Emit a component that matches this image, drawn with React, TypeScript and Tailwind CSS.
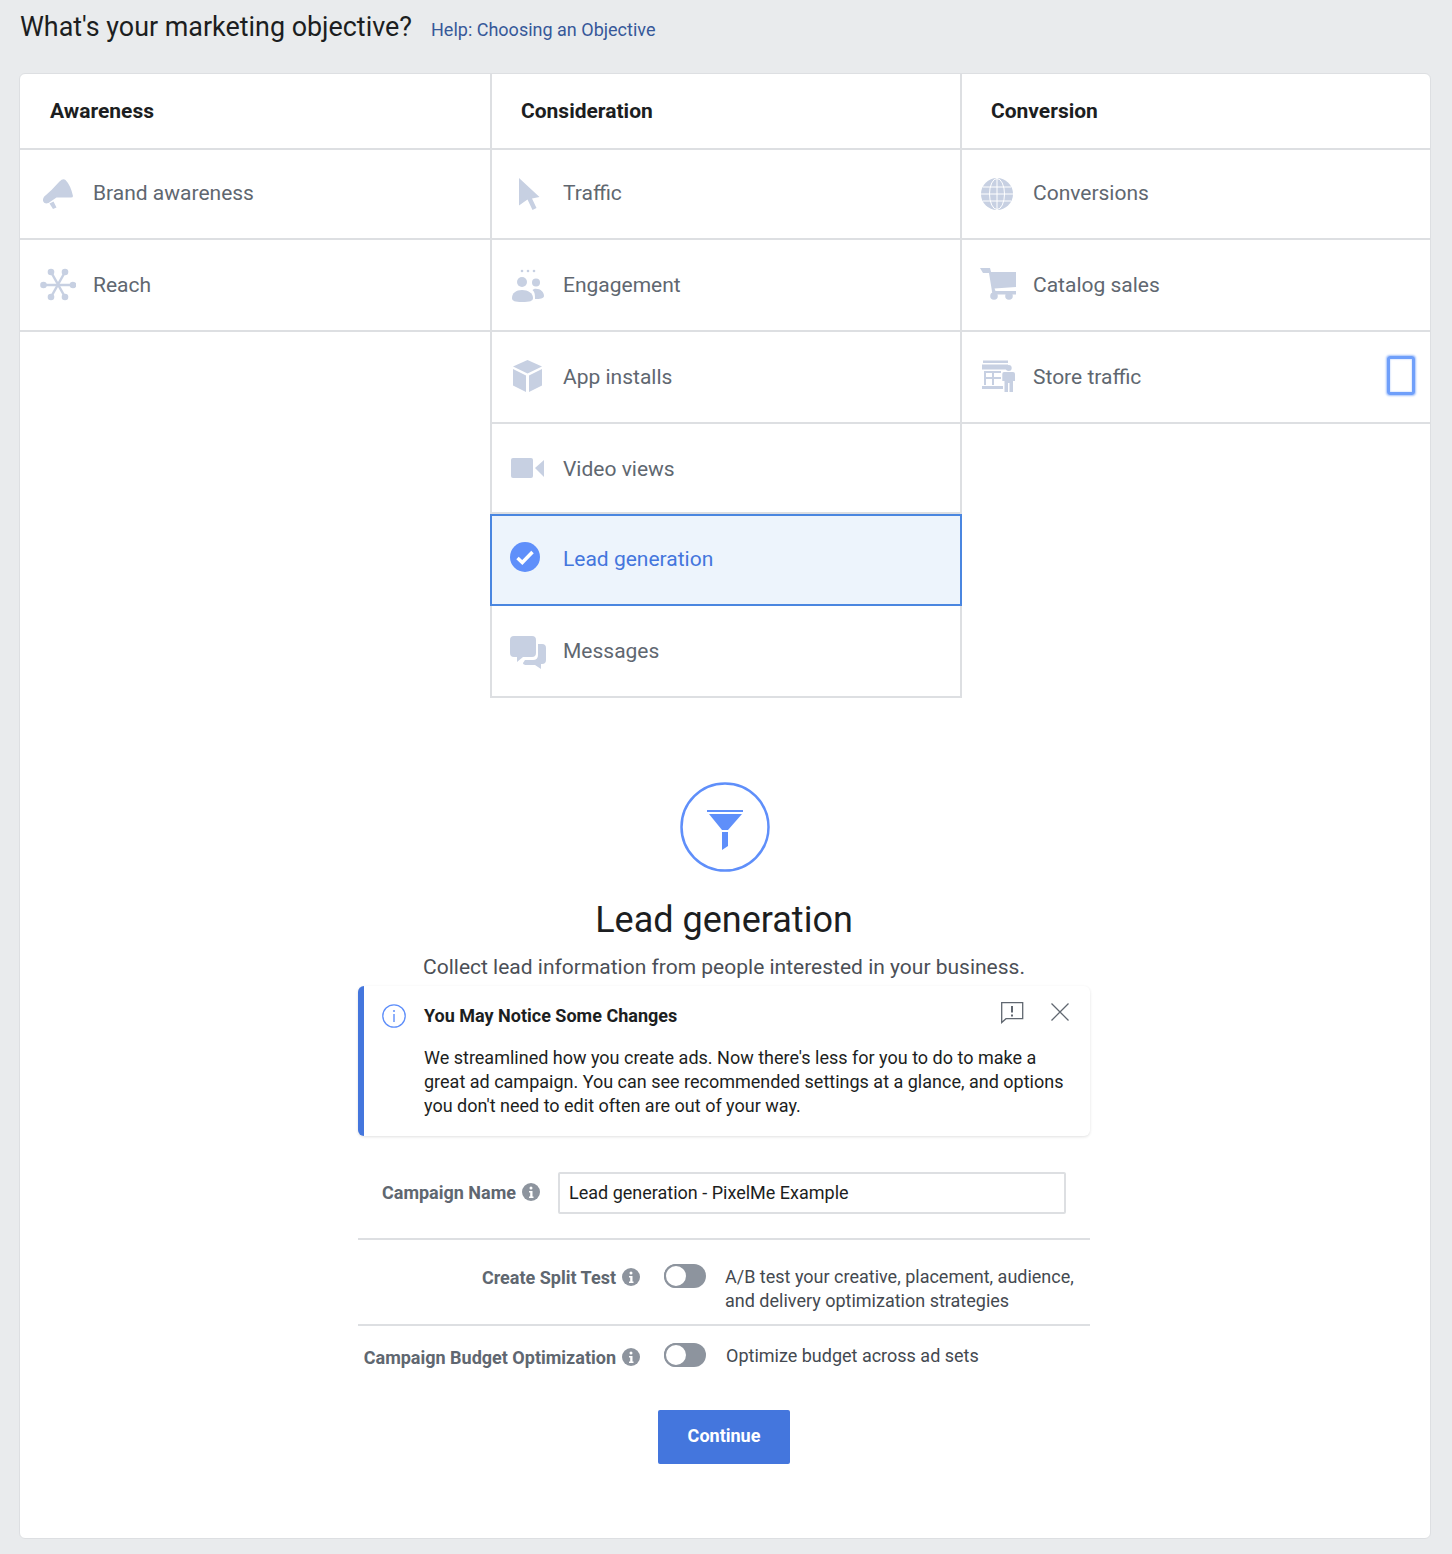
import React from 'react';

const ICON = '#c7d0e2';

const Megaphone = () => (
  <svg width="36" height="36" viewBox="0 0 36 36" fill={ICON}>
    <path d="M19.500 5.500 Q23 1.800 25.500 4 Q30.500 9 33 20 Q33 21.500 31 21.500 L16.500 21.500 L8.500 27 Q4 28.500 3 25 Q2.500 21.500 6 19 L11.500 14 Z" />
    <path d="M9.500 27.500 L13.500 25.500 L16.500 31.500 L13 33 Z" />
  </svg>
);

const Reach = () => (
  <svg width="36" height="36" viewBox="0 0 36 36" fill={ICON} stroke={ICON}>
    <g strokeWidth="2.500">
      <line x1="2" y1="18" x2="34" y2="18" />
      <line x1="11" y1="5" x2="25" y2="30" />
      <line x1="25" y1="5" x2="11" y2="30" />
    </g>
    <g stroke="none">
      <circle cx="3.500" cy="18" r="3.300" />
      <circle cx="33" cy="18" r="3.300" />
      <circle cx="11" cy="5" r="3.300" />
      <circle cx="25" cy="5" r="3.300" />
      <circle cx="11" cy="30" r="3.300" />
      <circle cx="25" cy="30" r="3.300" />
    </g>
  </svg>
);

const Cursor = () => (
  <svg width="36" height="36" viewBox="0 0 36 36" fill={ICON}>
    <polygon points="9,2 29.500,21 22,22.500 26.500,32 22.500,34 17.500,23.500 9,29.500" />
  </svg>
);

const People = () => (
  <svg width="36" height="36" viewBox="0 0 36 36" fill={ICON}>
    <circle cx="12" cy="4" r="1.300" />
    <circle cx="18" cy="4" r="1.300" />
    <circle cx="24" cy="4" r="1.300" />
    <circle cx="12" cy="15" r="5" />
    <circle cx="26" cy="15.500" r="4" />
    <path d="M2 31 C2 26 6 23 12 23 C18 23 23 26 23 31 C23 34 20 35 12 35 C5 35 2 34 2 31 Z" />
    <path d="M24 22 C30 21 34 25 34 29 C34 31.500 30 32 25 32 C25 28 25 25 22.500 23 Z" />
  </svg>
);

const Cube = () => (
  <svg width="36" height="36" viewBox="0 0 36 36" fill={ICON}>
    <polygon points="17.500,1 32,7.500 17.500,14.500 3,7.500" />
    <polygon points="3,10 16,16.500 16,33 3,26.500" />
    <polygon points="32,10 19,16.500 19,33 32,26.500" />
  </svg>
);

const Video = () => (
  <svg width="36" height="36" viewBox="0 0 36 36" fill={ICON}>
    <rect x="1" y="8" width="22" height="20" rx="2" />
    <polygon points="25,18 34,10 34,27" />
  </svg>
);

const CheckCircle = () => (
  <svg width="36" height="36" viewBox="0 0 36 36">
    <circle cx="15" cy="15" r="15" fill="#5f8ffa" />
    <path d="M7.500 16 L12.300 20.500 L22.500 10" fill="none" stroke="#fff" strokeWidth="3.500" />
  </svg>
);

const Bubbles = () => (
  <svg width="36" height="36" viewBox="0 0 36 36" fill={ICON}>
    <path d="M4 3 H22 Q26 3 26 7 V20 Q26 24 22 24 H13 L7 29 V24 H4 Q0 24 0 20 V7 Q0 3 4 3 Z" />
    <path d="M28 11 H32 Q36 11 36 15 V27 Q36 31 32 31 H31 V36 L25 32 H17 Q13 32 13 30 L15 27 H23 Q28 27 28 22 Z" />
  </svg>
);

const Globe = () => (
  <svg width="36" height="36" viewBox="0 0 36 36" fill="none">
    <circle cx="17" cy="18" r="16" fill={ICON} />
    <g stroke="#fff" strokeWidth="1">
      <ellipse cx="17" cy="18" rx="7.500" ry="15.500" />
      <line x1="17" y1="2" x2="17" y2="34" />
      <line x1="1" y1="18" x2="33" y2="18" />
      <line x1="3" y1="11" x2="31" y2="11" />
      <line x1="3" y1="25" x2="31" y2="25" />
    </g>
  </svg>
);

const Cart = () => (
  <svg width="36" height="36" viewBox="0 0 36 36" fill={ICON}>
    <path d="M0 1 H10 L11 5 H36 V20 L14.500 21.500 L15.500 24 H36 V27.500 H12.500 L9 6 H3 Z" />
    <circle cx="14" cy="29" r="3.800" />
    <circle cx="29" cy="29" r="3.800" />
  </svg>
);

const Store = () => (
  <svg width="36" height="36" viewBox="0 0 36 36" fill={ICON}>
    <rect x="3" y="1.500" width="25" height="2.500" />
    <rect x="2" y="5.500" width="26" height="5" />
    <path d="M3 12 H21 V14 H14 V18 H21 V20 H14 V26 H12 V20 H6 V26 H4 V12 Z M6 14 V18 H12 V14 Z" />
    <rect x="2" y="27" width="21" height="3" />
    <circle cx="28.700" cy="9" r="3" />
    <path d="M24 13 H33 Q35 13 35 15 V22 H33 V33 H29.500 V24 H28 V33 H24.500 V22 H22.300 V15 Q22.300 13 24 13 Z" />
  </svg>
);

const Funnel = () => (
  <svg width="90" height="90" viewBox="0 0 90 90" className="ml-[2px]">
    <circle cx="45" cy="45" r="43.500" fill="none" stroke="#5f8ffa" strokeWidth="2.500" />
    <g fill="#5f8ffa">
      <rect x="27" y="28" width="36" height="2" />
      <polygon points="29,32 62,32 48,48 42,48" />
      <polygon points="42,50 48,50 48,64 42,68" />
    </g>
  </svg>
);

const InfoDot = () => (
  <svg width="18" height="18" viewBox="0 0 18 18" className="shrink-0">
    <circle cx="9" cy="9" r="9" fill="#8d949e" />
    <circle cx="9" cy="5" r="1.500" fill="#fff" />
    <path d="M7 8 H10.500 V13.500 H11.500 V15 H7 V13.500 H8.200 V9.500 H7 Z" fill="#fff" />
  </svg>
);

const Toggle = () => (
  <div className="w-[42px] h-6 rounded-full bg-[#8d949e] shrink-0">
    <div className="w-6 h-6 rounded-full bg-white border-2 border-[#8d949e]" />
  </div>
);

type Item = { label: string; icon: React.ReactNode; h: string; nudge?: string; focus?: boolean };

const Row = ({ label, icon, h, nudge = 'pt-[2px]', focus }: Item) => (
  <div className={`flex items-center border-b-2 border-[#dddfe2] pl-[18px] ${h}`}>
    <span className="w-9 mr-[17px] shrink-0">{icon}</span>
    <span className={`text-[21px] text-[#606770] ${nudge}`}>{label}</span>
    {focus && (
      <span className="ml-auto mr-[15px] -mt-[3px] w-[28px] h-[39px] rounded-[3px] border-[3px] border-[#6f9ffa] shadow-[0_0_2px_1px_#a5c3fb,inset_0_0_2px_#a5c3fb]" />
    )}
  </div>
);

const ColHead = ({ title, pad }: { title: string; pad: string }) => (
  <div className={`flex items-center h-[76px] pt-[2px] border-b-2 border-[#dddfe2] text-[21px] font-bold text-[#1c1e21] ${pad}`}>
    {title}
  </div>
);

export default function App() {
  return (
    <div className="min-h-[1554px] bg-[#e9ebed] [font-family:Roboto,sans-serif] pb-[15px]">
      <div className="flex items-baseline h-[73px] pl-5 pt-[9px]">
        <h1 className="text-[26.900px] leading-[36px] text-[#1c1e21]">What's your marketing objective?</h1>
        <a className="ml-[19px] text-[18px] text-[#365899]">Help: Choosing an Objective</a>
      </div>

      <div className="ml-[19px] mr-[21px] h-[1466px] bg-white border border-[#dddfe2] rounded-[6px]">
        <div className="grid grid-cols-[470px_472px_1fr] items-start">
          <div>
            <ColHead title="Awareness" pad="pl-[30px]" />
            <div className="[&>div]:pl-5">
              <Row label="Brand awareness" icon={<Megaphone />} h="h-[90px]" nudge="" />
              <Row label="Reach" icon={<Reach />} h="h-[92px]" />
            </div>
          </div>

          <div className="border-x-2 border-[#dddfe2]">
            <ColHead title="Consideration" pad="pl-[29px]" />
            <Row label="Traffic" icon={<Cursor />} h="h-[90px]" nudge="" />
            <Row label="Engagement" icon={<People />} h="h-[92px]" />
            <Row label="App installs" icon={<Cube />} h="h-[92px]" />
            <Row label="Video views" icon={<Video />} h="h-[90px]" nudge="pt-[4px]" />
            <div className="-mx-0.5 flex items-center h-[92px] pl-[18px] border-2 border-[#4a86e0] bg-[#edf4fc]">
              <span className="w-9 mr-[17px] shrink-0"><CheckCircle /></span>
              <span className="text-[21px] text-[#4476dd]">Lead generation</span>
            </div>
            <Row label="Messages" icon={<Bubbles />} h="h-[92px]" />
          </div>

          <div>
            <ColHead title="Conversion" pad="pl-[29px]" />
            <Row label="Conversions" icon={<Globe />} h="h-[90px]" nudge="" />
            <Row label="Catalog sales" icon={<Cart />} h="h-[92px]" />
            <Row label="Store traffic" icon={<Store />} h="h-[92px]" focus />
          </div>
        </div>

        <div className="w-[732px] ml-[338px] pt-[84px]">
          <div className="flex flex-col items-center">
            <Funnel />
            <h2 className="mt-[22px] text-[36px] leading-[52px] text-[#1c1e21]">Lead generation</h2>
            <p className="mt-[6px] text-[21px] leading-[30px] text-[#4b4f56]">
              Collect lead information from people interested in your business.
            </p>
          </div>

          <div className="mt-[4px] h-[150px] flex bg-white rounded-[6px] overflow-hidden shadow-[0_1px_3px_rgba(0,0,0,0.12)] border-l-[6px] border-[#4476dd] relative">
            <svg width="24" height="24" viewBox="0 0 24 24" fill="none" className="ml-[18px] mt-[18px] shrink-0">
              <circle cx="12" cy="12" r="11.200" stroke="#5f8ffa" strokeWidth="1.300" />
              <circle cx="12" cy="7" r="1" fill="#5f8ffa" />
              <rect x="11.300" y="10" width="1.400" height="8" fill="#5f8ffa" />
            </svg>
            <div className="ml-[18px] pt-[17px]">
              <div className="text-[18px] leading-[26px] font-bold text-[#1c1e21]">You May Notice Some Changes</div>
              <p className="mt-[17px] text-[18px] leading-[24px] text-[#1c1e21] w-[650px]">
                We streamlined how you create ads. Now there's less for you to do to make a great ad campaign. You can see recommended settings at a glance, and options you don't need to edit often are out of your way.
              </p>
            </div>
            <svg width="24" height="24" viewBox="0 0 24 24" fill="none" stroke="#606770" strokeWidth="1.300" className="absolute left-[636px] top-[14px]">
              <path d="M1.700 2.700 H22.700 V18.700 H6 L1.700 22.500 Z" />
              <path d="M12 6 V12.500 M12 14.500 V16.500" strokeWidth="2" />
            </svg>
            <svg width="20" height="20" viewBox="0 0 20 20" fill="none" stroke="#606770" strokeWidth="1.300" className="absolute left-[686px] top-[16px]">
              <path d="M1.500 1.500 L18.500 18.500 M18.500 1.500 L1.500 18.500" />
            </svg>
          </div>

          <div className="mt-[36px] flex items-center h-[42px]">
            <div className="w-[182px] pb-[2px] flex items-center justify-end gap-[6px] text-[18px] font-bold text-[#606770]">
              Campaign Name <InfoDot />
            </div>
            <div className="ml-[18px] w-[508px] h-[42px] pb-[2px] border-2 border-[#dddfe2] rounded-[2px] flex items-center pl-[9px] text-[18px] text-[#1c1e21]">
              Lead generation - PixelMe Example
            </div>
          </div>

          <div className="mt-[24px] h-[88px] border-t-2 border-b-2 border-[#dddfe2] flex pt-[24px]">
            <div className="w-[282px] h-[26px] flex items-center justify-end gap-[6px] text-[18px] font-bold text-[#606770]">
              Create Split Test <InfoDot />
            </div>
            <div className="ml-[24px]"><Toggle /></div>
            <p className="ml-[19px] mt-[1px] text-[18px] leading-[24px] text-[#444950]">
              A/B test your creative, placement, audience,<br />and delivery optimization strategies
            </p>
          </div>

          <div className="flex pt-[17px] h-[84px]">
            <div className="w-[282px] h-[28px] flex items-center justify-end gap-[6px] text-[18px] font-bold text-[#606770] whitespace-nowrap">
              Campaign Budget Optimization <InfoDot />
            </div>
            <div className="ml-[24px]"><Toggle /></div>
            <p className="ml-[20px] mt-[1px] text-[18px] leading-[24px] text-[#444950]">Optimize budget across ad sets</p>
          </div>

          <button className="block mx-auto w-[132px] h-[54px] pb-[3px] rounded-[2px] bg-[#4476dd] text-white text-[18px] font-bold">
            Continue
          </button>
        </div>
      </div>
    </div>
  );
}
